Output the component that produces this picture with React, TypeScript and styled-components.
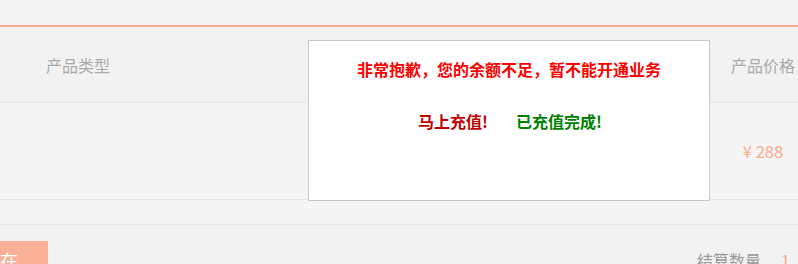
import React from "react"
import styled, { createGlobalStyle } from "styled-components"

const Global = createGlobalStyle`
  html, body {
    margin: 0;
    padding: 0;
    background: #f5f5f5;
    overflow: hidden;
    font-family: "Noto Sans CJK SC", "Liberation Sans", sans-serif;
  }
`

export default function App() {
    return (
        <>
            <Global />
            <Page>
                <TopBar />
                <Table>
                    <HeadRow>
                        <Cell>产品类型</Cell>
                        <Cell />
                        <Cell center>产品价格</Cell>
                    </HeadRow>
                    <DataRow>
                        <Cell />
                        <Cell />
                        <Price center>¥ 288</Price>
                    </DataRow>
                    <ThinRow />
                </Table>
                <Footer>
                    <PayButton>现在</PayButton>
                    <Count>
                        结算数量<span>1</span>
                    </Count>
                </Footer>
                <Modal>
                    <ModalTitle>非常抱歉，您的余额不足，暂不能开通业务</ModalTitle>
                    <ModalActions>
                        <Action color="#c00000">马上充值!</Action>
                        <Action color="#008000">已充值完成!</Action>
                    </ModalActions>
                </Modal>
            </Page>
        </>
    )
}

const Page = styled.div`
    position: relative;
    width: 798px;
    height: 264px;
    overflow: hidden;
`

const TopBar = styled.div`
    height: 25px;
    border-bottom: 2px solid #f7ad95;
`

const Table = styled.div`
    display: flex;
    flex-direction: column;
`

const HeadRow = styled.div`
    display: grid;
    grid-template-columns: 156px 1fr 130px;
    width: 828px;
    height: 75px;
    align-items: center;
    background: #f2f2f2;
    border-bottom: 1px solid #e6e6e6;
`

const DataRow = styled(HeadRow)`
    height: 96px;
    background: #f5f5f5;
`

const ThinRow = styled.div`
    height: 24px;
    border-bottom: 1px solid #e6e6e6;
`

const Cell = styled.div<{ center?: boolean }>`
    font-size: 16px;
    color: #aaaaaa;
    text-align: center;
`

const Price = styled(Cell)`
    color: #f9a98c;
    font-size: 16.5px;
`

const Footer = styled.div`
    display: flex;
    align-items: flex-start;
    justify-content: space-between;
    height: 40px;
    padding-top: 16px;
    background: #f2f2f2;
`

const PayButton = styled.div`
    width: 96px;
    height: 40px;
    margin-left: -48px;
    background: #f9b096;
    color: #ffffff;
    font-size: 18px;
    line-height: 38px;
    text-align: center;
    letter-spacing: 2px;
`

const Count = styled.div`
    font-size: 16px;
    color: #999999;
    padding-top: 7px;
    margin-right: 8px;
    span {
        color: #f9a98c;
        margin-left: 20px;
    }
`

const Modal = styled.div`
    position: absolute;
    left: 308px;
    top: 40px;
    width: 400px;
    height: 159px;
    background: #ffffff;
    border: 1px solid #c8c8c8;
    display: flex;
    flex-direction: column;
    align-items: center;
`

const ModalTitle = styled.div`
    margin-top: 17px;
    font-size: 16px;
    font-weight: 700;
    line-height: 22px;
    color: #ff0000;
`

const ModalActions = styled.div`
    display: flex;
    gap: 28px;
    margin-top: 30px;
    margin-left: 2px;
`

const Action = styled.div<{ color: string }>`
    font-size: 16px;
    font-weight: 700;
    line-height: 22px;
    color: ${(p) => p.color};
    cursor: pointer;
`
